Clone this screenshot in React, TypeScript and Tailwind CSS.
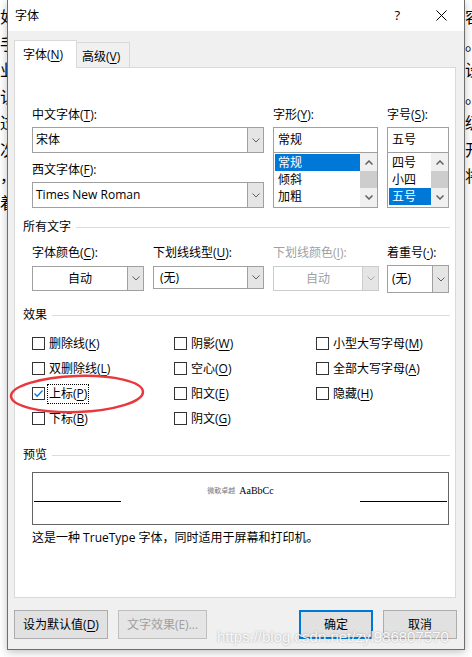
import React from 'react';

const ui = "font-['Open_Sans','Noto_Sans_CJK_SC',sans-serif]";

const leftChars = ['如', '手', '业', '认', '过', '次', '，', '着'];
const rightChars = ['容', '。', '设', '。', '级', '开', '将'];

function DownArrow({ color = '#5f5f5f' }: { color?: string }) {
  return (
    <svg width="8" height="5" viewBox="0 0 8 5">
      <path d="M0.5 0.5 L4 4 L7.5 0.5" fill="none" stroke={color} strokeWidth="1" />
    </svg>
  );
}

function ScrollArrow({ up }: { up?: boolean }) {
  return (
    <svg width="8" height="5" viewBox="0 0 8 5">
      <path
        d={up ? 'M0.5 4.5 L4 1 L7.5 4.5' : 'M0.5 0.5 L4 4 L7.5 0.5'}
        fill="none"
        stroke="#606060"
        strokeWidth="1.5"
      />
    </svg>
  );
}

function Combo({
  text,
  size,
  center = false,
  disabled = false,
  pad = 'pl-[3px]',
}: {
  text: string;
  size: string;
  center?: boolean;
  disabled?: boolean;
  pad?: string;
}) {
  const bd = disabled ? 'border-[#cccccc]' : 'border-[#a0a0a0]';
  return (
    <div className={`flex border bg-white ${bd} ${size}`}>
      <div
        className={`flex flex-1 items-center ${center ? 'justify-center' : pad} ${
          disabled ? 'text-[#a0a0a0]' : 'text-black'
        }`}
      >
        {text}
      </div>
      <div className={`flex w-[16px] items-center justify-center border-l bg-[#e5e5e5] ${bd}`}>
        <DownArrow color={disabled ? '#a8a8a8' : '#5f5f5f'} />
      </div>
    </div>
  );
}

function ListBox({ items, sel, size }: { items: string[]; sel: number; size: string }) {
  return (
    <div className={`flex h-[55px] border border-t-0 border-[#a0a0a0] bg-white ${size}`}>
      <div className="flex-1 pl-[1px] pt-[1px]">
        {items.map((it, i) => (
          <div
            key={it}
            className={`h-[17px] pl-[3px] leading-[17px] ${i === sel ? 'bg-[#0078d7] text-white' : 'text-black'}`}
          >
            {it}
          </div>
        ))}
      </div>
      <div className="flex w-[17px] flex-col bg-[#f0f0f0]">
        <div className="flex h-[18px] items-center justify-center">
          <ScrollArrow up />
        </div>
        <div className="h-[17px] bg-[#cdcdcd]" />
        <div className="flex h-[18px] items-center justify-center">
          <ScrollArrow />
        </div>
      </div>
    </div>
  );
}

function Heading({ text }: { text: string }) {
  return (
    <div className="flex h-[16px] items-center gap-[5px] pl-[8px] pr-[5px]">
      <span className="leading-[16px]">{text}</span>
      <div className="h-[1px] flex-1 bg-[#dcdcdc]" />
    </div>
  );
}

function Check({
  label,
  k,
  checked = false,
  focus = false,
}: {
  label: string;
  k: string;
  checked?: boolean;
  focus?: boolean;
}) {
  return (
    <div className="flex h-[25px] items-center">
      <div className="flex h-[13px] w-[13px] items-center justify-center border border-[#333333] bg-white">
        {checked && (
          <svg width="11" height="11" viewBox="0 0 11 11">
            <path d="M1.5 5.5 L4.2 8.2 L9.5 2.5" fill="none" stroke="#0078d7" strokeWidth="1.3" />
          </svg>
        )}
      </div>
      <span
        className={`ml-[2px] border px-[1px] py-[1px] leading-[16px] ${
          focus ? 'border-dotted border-black' : 'border-transparent'
        }`}
      >
        {label}(<u className="underline-offset-[2px]">{k}</u>)
      </span>
    </div>
  );
}

function Label({ children, gray = false }: { children: React.ReactNode; gray?: boolean }) {
  return <div className={`h-[16px] leading-[16px] ${gray ? 'text-[#a0a0a0]' : 'text-black'}`}>{children}</div>;
}

function Btn({
  text,
  size,
  primary = false,
  disabled = false,
}: {
  text: React.ReactNode;
  size: string;
  primary?: boolean;
  disabled?: boolean;
}) {
  return (
    <div
      className={`flex h-[29px] items-center justify-center ${size} ${
        primary
          ? 'border-2 border-[#0078d7] bg-[#e1e1e1] text-black'
          : disabled
          ? 'border border-[#bfbfbf] bg-[#e5e5e5] text-[#a0a0a0]'
          : 'border border-[#adadad] bg-[#e1e1e1] text-black'
      }`}
    >
      {text}
    </div>
  );
}

function FontPanel() {
  return (
    <div className="h-[531px] w-[442px] border border-[#d9d9d9] bg-white text-[12px]">
      {/* 字体选择 */}
      <div className="ml-[17px] mt-[39px] flex">
        <div className="flex w-[232px] flex-col">
          <Label>
            中文字体(<u className="underline-offset-[2px]">T</u>):
          </Label>
          <Combo text="宋体" size="mt-[4px] h-[26px] w-[232px]" />
          <div className="mt-[9px]">
            <Label>
              西文字体(<u className="underline-offset-[2px]">F</u>):
            </Label>
          </div>
          <Combo text="Times New Roman" size="mt-[4px] h-[26px] w-[232px]" />
        </div>
        <div className="ml-[9px] flex w-[105px] flex-col">
          <Label>
            字形(<u className="underline-offset-[2px]">Y</u>):
          </Label>
          <div className="mt-[4px] flex h-[26px] items-center border border-[#a0a0a0] bg-white pl-[4px]">常规</div>
          <ListBox items={['常规', '倾斜', '加粗']} sel={0} size="w-[105px]" />
        </div>
        <div className="ml-[9px] flex w-[62px] flex-col">
          <Label>
            字号(<u className="underline-offset-[2px]">S</u>):
          </Label>
          <div className="mt-[4px] flex h-[26px] items-center border border-[#a0a0a0] bg-white pl-[4px]">五号</div>
          <ListBox items={['四号', '小四', '五号']} sel={2} size="w-[62px]" />
        </div>
      </div>

      {/* 所有文字 */}
      <div className="mt-[11px]">
        <Heading text="所有文字" />
      </div>
      <div className="ml-[17px] mt-[10px] flex h-[48px]">
        <div className="flex w-[112px] flex-col">
          <Label>
            字体颜色(<u className="underline-offset-[2px]">C</u>):
          </Label>
          <Combo text="自动" center size="mt-[5px] h-[25px] w-[112px]" />
        </div>
        <div className="ml-[9px] flex w-[111px] flex-col">
          <Label>
            下划线线型(<u className="underline-offset-[2px]">U</u>):
          </Label>
          <Combo text="(无)" pad="pl-[6px]" size="mt-[5px] h-[23px] w-[111px]" />
        </div>
        <div className="ml-[9px] flex w-[106px] flex-col">
          <Label gray>
            下划线颜色(<u className="underline-offset-[2px]">I</u>):
          </Label>
          <Combo text="自动" center disabled size="mt-[5px] h-[25px] w-[106px]" />
        </div>
        <div className="ml-[8px] flex w-[62px] flex-col">
          <Label>
            着重号(<u className="underline-offset-[2px]">·</u>):
          </Label>
          <Combo text="(无)" pad="pl-[4px]" size="mt-[4px] h-[28px] w-[62px]" />
        </div>
      </div>

      {/* 效果 */}
      <div className="mt-[14px]">
        <Heading text="效果" />
      </div>
      <div className="ml-[17px] mt-[8px] grid grid-cols-[142px_142px_1fr]">
        <Check label="删除线" k="K" />
        <Check label="阴影" k="W" />
        <Check label="小型大写字母" k="M" />
        <Check label="双删除线" k="L" />
        <Check label="空心" k="O" />
        <Check label="全部大写字母" k="A" />
        <Check label="上标" k="P" checked focus />
        <Check label="阳文" k="E" />
        <Check label="隐藏" k="H" />
        <Check label="下标" k="B" />
        <Check label="阴文" k="G" />
      </div>

      {/* 预览 */}
      <div className="mt-[16px]">
        <Heading text="预览" />
      </div>
      <div className="ml-[17px] mt-[9px] h-[53px] w-[417px] border border-[#646464] bg-white px-[1px] pt-[13px]">
        <div className="flex h-[16px] items-end">
          <div className="h-[1px] w-[87px] bg-black" />
          <div className="mb-[5px] flex flex-1 items-end justify-center gap-[4px] leading-[12px]">
            <span className="text-[7px] text-[#777777]">微軟卓越</span>
            <span className="font-['Liberation_Serif',serif] text-[10px] text-black">AaBbCc</span>
          </div>
          <div className="h-[1px] w-[87px] bg-black" />
        </div>
      </div>
      <div className="ml-[17px] mt-[5px] leading-[16px]">这是一种 TrueType 字体，同时适用于屏幕和打印机。</div>
    </div>
  );
}

function Dialog() {
  return (
    <div className="flex h-[650px] w-[458px] flex-col border-x border-b border-[#6e6e6e] shadow-[0_2px_8px_rgba(0,0,0,0.25)]">
      <div className="flex h-[31px] items-center bg-white pl-[7px] text-[12px]">
        <span>字体</span>
        <span className="ml-auto text-[13px]">?</span>
        <svg width="11" height="11" viewBox="0 0 11 11" className="ml-[36px] mr-[17px]">
          <path d="M0.5 0.5 L10.5 10.5 M10.5 0.5 L0.5 10.5" stroke="#000" strokeWidth="1" />
        </svg>
      </div>
      <div className="flex flex-1 flex-col bg-[#f0f0f0] pl-[6px] pt-[9px] text-[12px]">
        <div className="flex h-[27px] items-end">
          <div className="relative z-10 -mb-[1px] h-[28px] w-[63px] border-x border-t border-[#d9d9d9] bg-white pl-[8px] pt-[6px] leading-[16px]">
            字体(<u className="underline-offset-[2px]">N</u>)
          </div>
          <div className="h-[25px] w-[53px] border-r border-t border-[#d9d9d9] bg-[#f0f0f0] pl-[5px] pt-[6px] leading-[16px]">
            高级(<u className="underline-offset-[2px]">V</u>)
          </div>
        </div>
        <FontPanel />
        <div className="mt-[12px] flex">
          <Btn
            size="w-[94px]"
            text={
              <>
                设为默认值(<u className="underline-offset-[2px]">D</u>)
              </>
            }
          />
          <Btn size="ml-[10px] w-[89px]" disabled text="文字效果(E)..." />
          <Btn size="ml-[92px] w-[74px]" primary text="确定" />
          <Btn size="ml-[10px] w-[74px]" text="取消" />
        </div>
      </div>
    </div>
  );
}

export default function App() {
  return (
    <div className={`relative flex h-[657px] w-[472px] overflow-hidden bg-white text-black ${ui}`}>
      <div className="w-[7px] overflow-hidden pt-[4px]">
        <div className="w-[16px] text-[16px] leading-[26.5px]">
          {leftChars.map((c, i) => (
            <div key={i}>{c}</div>
          ))}
        </div>
      </div>
      <Dialog />
      <div className="w-[7px] overflow-hidden pt-[4px]">
        <div className="w-[16px] text-[16px] leading-[26.5px]">
          {rightChars.map((c, i) => (
            <div key={i}>{c}</div>
          ))}
        </div>
      </div>

      {/* 红色圈注 */}
      <svg width="138" height="42" viewBox="0 0 138 42" className="absolute left-[8px] top-[373px]">
        <ellipse cx="69" cy="21" rx="66" ry="18" fill="none" stroke="#e8383d" strokeWidth="2.5" transform="rotate(-2 69 21)" />
      </svg>

      {/* 水印 */}
      <div className="absolute left-[217px] top-[628px] font-['Liberation_Sans',sans-serif] text-[15px] leading-[18px] text-white/90 [text-shadow:0_0_2px_rgba(0,0,0,0.35)]">
        https://blog.csdn.net/zyl986807570
      </div>
    </div>
  );
}
